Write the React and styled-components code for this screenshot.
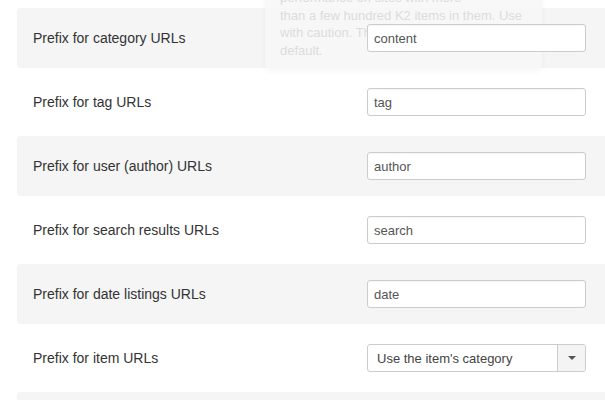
import React from "react";
import styled, { createGlobalStyle } from "styled-components";

const Global = createGlobalStyle`
  html, body { margin: 0; padding: 0; background: #fff; overflow: hidden; }
  body { font-family: "Liberation Sans", Arial, sans-serif; }
`;

const Page = styled.div`
  position: relative;
  width: 605px;
  height: 400px;
  overflow: hidden;
  padding: 8px 0 0 17px;
  box-sizing: border-box;
`;

const List = styled.div`
  display: flex;
  flex-direction: column;
  gap: 4px;
  width: 640px;
`;

const Row = styled.div`
  display: grid;
  grid-template-columns: 334px 219px;
  align-items: center;
  height: 60px;
  padding-left: 16px;
  border-radius: 4px;
  background: ${(p) => (p.$shaded ? "#f5f5f5" : "#fff")};
`;

const Label = styled.label`
  font-size: 14px;
  color: #333;
  line-height: 20px;
`;

const Input = styled.div`
  position: relative;
  z-index: 2;
  box-sizing: border-box;
  height: 28px;
  padding: 0 6px;
  display: flex;
  align-items: center;
  border: 1px solid #ccc;
  border-radius: 3px;
  background: #fff;
  font-size: 13px;
  color: #555;
  box-shadow: inset 0 1px 1px rgba(0, 0, 0, 0.04);
`;

const Select = styled.div`
  position: relative;
  z-index: 2;
  box-sizing: border-box;
  height: 28px;
  display: flex;
  border: 1px solid #ccc;
  border-radius: 3px;
  background: #fff;
  font-size: 13px;
  color: #444;
  overflow: hidden;
`;

const SelectValue = styled.div`
  flex: 1;
  display: flex;
  align-items: center;
  padding-left: 9px;
`;

const SelectButton = styled.div`
  width: 27px;
  border-left: 1px solid #ccc;
  background: #f4f4f4;
  display: flex;
  align-items: center;
  justify-content: center;
`;

const Caret = styled.span`
  width: 0;
  height: 0;
  border-left: 4px solid transparent;
  border-right: 4px solid transparent;
  border-top: 4px solid #555;
`;

const Tooltip = styled.div`
  position: absolute;
  z-index: 1;
  left: 265px;
  top: -12px;
  width: 277px;
  box-sizing: border-box;
  padding: 1px 15px 8px 15px;
  background: rgba(247, 247, 247, 0.85);
  box-shadow: 0 3px 6px rgba(0, 0, 0, 0.04);
  border-radius: 0 0 4px 4px;
  font-size: 13px;
  line-height: 17.7px;
  color: #dcdcdc;
`;

const TipLine = styled.span`
  display: block;
  white-space: nowrap;
`;

const rows = [
  { label: "Prefix for category URLs", value: "content" },
  { label: "Prefix for tag URLs", value: "tag" },
  { label: "Prefix for user (author) URLs", value: "author" },
  { label: "Prefix for search results URLs", value: "search" },
  { label: "Prefix for date listings URLs", value: "date" },
  { label: "Prefix for item URLs", select: "Use the item's category" },
  { label: "", value: null },
];

export default function App() {
  return (
    <>
      <Global />
      <Page>
        <Tooltip>
          <TipLine>performance on sites with more</TipLine>
          <TipLine>than a few hundred K2 items in them. Use</TipLine>
          <TipLine>with caution. This option is disabled by</TipLine>
          <TipLine>default.</TipLine>
        </Tooltip>
        <List>
          {rows.map((r, i) => (
            <Row key={i} $shaded={i % 2 === 0}>
              <Label>{r.label}</Label>
              {r.select ? (
                <Select>
                  <SelectValue>{r.select}</SelectValue>
                  <SelectButton>
                    <Caret />
                  </SelectButton>
                </Select>
              ) : r.value !== null ? (
                <Input>{r.value}</Input>
              ) : (
                <span />
              )}
            </Row>
          ))}
        </List>
      </Page>
    </>
  );
}
